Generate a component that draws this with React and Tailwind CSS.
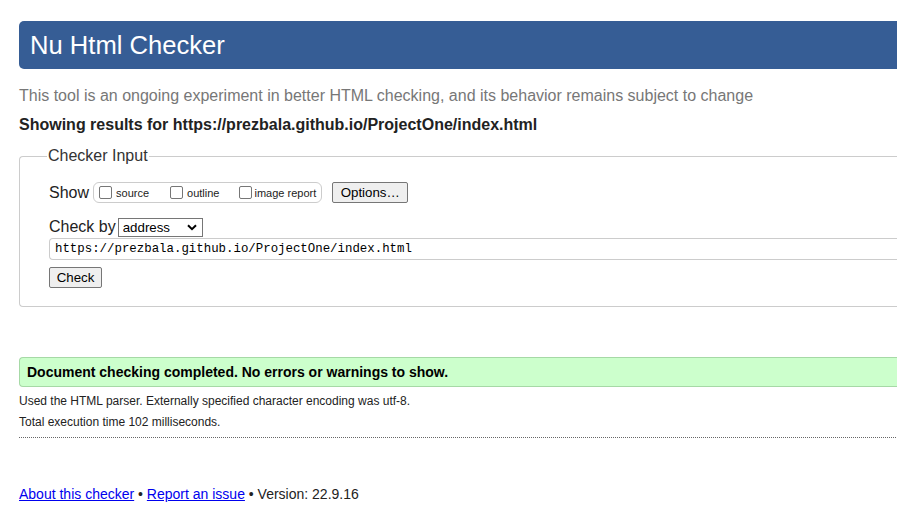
import React, { useState } from 'react';

function App() {
  const [url, setUrl] = useState('https://prezbala.github.io/ProjectOne/index.html');
  const [checkBy, setCheckBy] = useState('address');

  return (
    <div className="w-full min-h-[514px] overflow-hidden bg-white text-[#222] font-['Liberation_Sans',Arial,sans-serif]">
      <div className="w-[960px] pl-[19px] pt-[21px]">
        {/* Header */}
        <h1 className="h-[48px] rounded-l-[5px] bg-[#365d95] pl-[11px] text-[25.6px] leading-[48px] text-white">
          Nu Html Checker
        </h1>

        <p className="mt-[16px] text-[16px] leading-[22px] text-[#777]">
          This tool is an ongoing experiment in better HTML checking, and its behavior remains subject to change
        </p>
        <p className="mt-[8px] text-[16px] font-bold leading-[20px] text-[#222]">
          Showing results for https://prezbala.github.io/ProjectOne/index.html
        </p>

        {/* Checker input */}
        <fieldset className="mt-[11px] h-[161px] rounded-l-[4px] border border-r-0 border-[#ccc] pl-[29px] pr-0 pt-0">
          <legend className="ml-[-2px] px-[1px] text-[16px] leading-[20px] text-[#333]">Checker Input</legend>

          <div className="mt-[16px] flex items-center">
            <span className="text-[16px] leading-[20px] text-[#222]">Show</span>
            <div className="ml-[4px] flex h-[21px] items-center rounded-[6px] border border-[#ccc] pl-[5px] pr-[5px] text-[11px]">
              <label className="flex items-center">
                <span className="inline-block h-[13px] w-[13px] rounded-[2px] border border-[#767676] bg-white"></span>
                <span className="ml-[4px] mt-[2px]">source</span>
              </label>
              <label className="ml-[21px] flex items-center">
                <span className="inline-block h-[13px] w-[13px] rounded-[2px] border border-[#767676] bg-white"></span>
                <span className="ml-[4px] mt-[2px]">outline</span>
              </label>
              <label className="ml-[20px] flex items-center">
                <span className="inline-block h-[13px] w-[13px] rounded-[2px] border border-[#767676] bg-white"></span>
                <span className="ml-[2px] mt-[2px]">image report</span>
              </label>
            </div>
            <button className="ml-[10px] h-[21px] w-[76px] rounded-[2px] border border-[#767676] bg-[#efefef] text-[13.3px] text-black">
              Options…
            </button>
          </div>

          <div className="mt-[14px] flex items-center">
            <span className="text-[16px] leading-[20px] text-[#222]">Check by</span>
            <div className="relative ml-[2px] flex h-[19px] w-[85px] items-center border border-[#767676] bg-white">
              <select
                value={checkBy}
                onChange={(e) => setCheckBy(e.target.value)}
                className="block h-[17px] w-full appearance-none bg-transparent py-0 pl-[4px] text-[13.3px] leading-[15px] text-black outline-none"
              >
                <option value="address">address</option>
                <option value="file">file upload</option>
                <option value="text">text input</option>
              </select>
              <svg className="pointer-events-none absolute right-[5px] top-[5px]" width="10" height="7" viewBox="0 0 10 7">
                <path d="M1 1.2 L5 5.2 L9 1.2" fill="none" stroke="#000" strokeWidth="2" />
              </svg>
            </div>
          </div>

          <input
            value={url}
            onChange={(e) => setUrl(e.target.value)}
            className="mt-[1px] block h-[22px] w-[900px] rounded-l-[4px] border border-r-0 border-[#ccc] pl-[5px] font-['Liberation_Mono',monospace] text-[12.4px] text-black outline-none"
          />

          <button className="mt-[7px] block h-[21px] w-[53px] rounded-[2px] border border-[#767676] bg-[#efefef] text-[13.3px] text-black">
            Check
          </button>
        </fieldset>

        {/* Result */}
        <div className="mt-[50px] h-[30px] rounded-l-[4px] border border-r-0 border-[#a6d9a6] bg-[#ccffcc] pl-[7px] text-[14px] font-bold leading-[28px] text-black">
          Document checking completed. No errors or warnings to show.
        </div>

        <p className="mt-[7px] text-[12px] leading-[14px] text-[#222]">
          Used the HTML parser. Externally specified character encoding was utf-8.
        </p>
        <p className="mt-[7px] text-[12px] leading-[14px] text-[#222]">Total execution time 102 milliseconds.</p>
        <div className="mt-[8px] border-t border-dotted border-[#666]"></div>

        {/* Footer */}
        <p className="mt-[47px] text-[14px] leading-[18px] text-[#222]">
          <a href="#" className="text-[#00e] underline">About this checker</a>
          {' • '}
          <a href="#" className="text-[#00e] underline">Report an issue</a>
          {' • Version: 22.9.16'}
        </p>
      </div>
    </div>
  );
}

export default App;
